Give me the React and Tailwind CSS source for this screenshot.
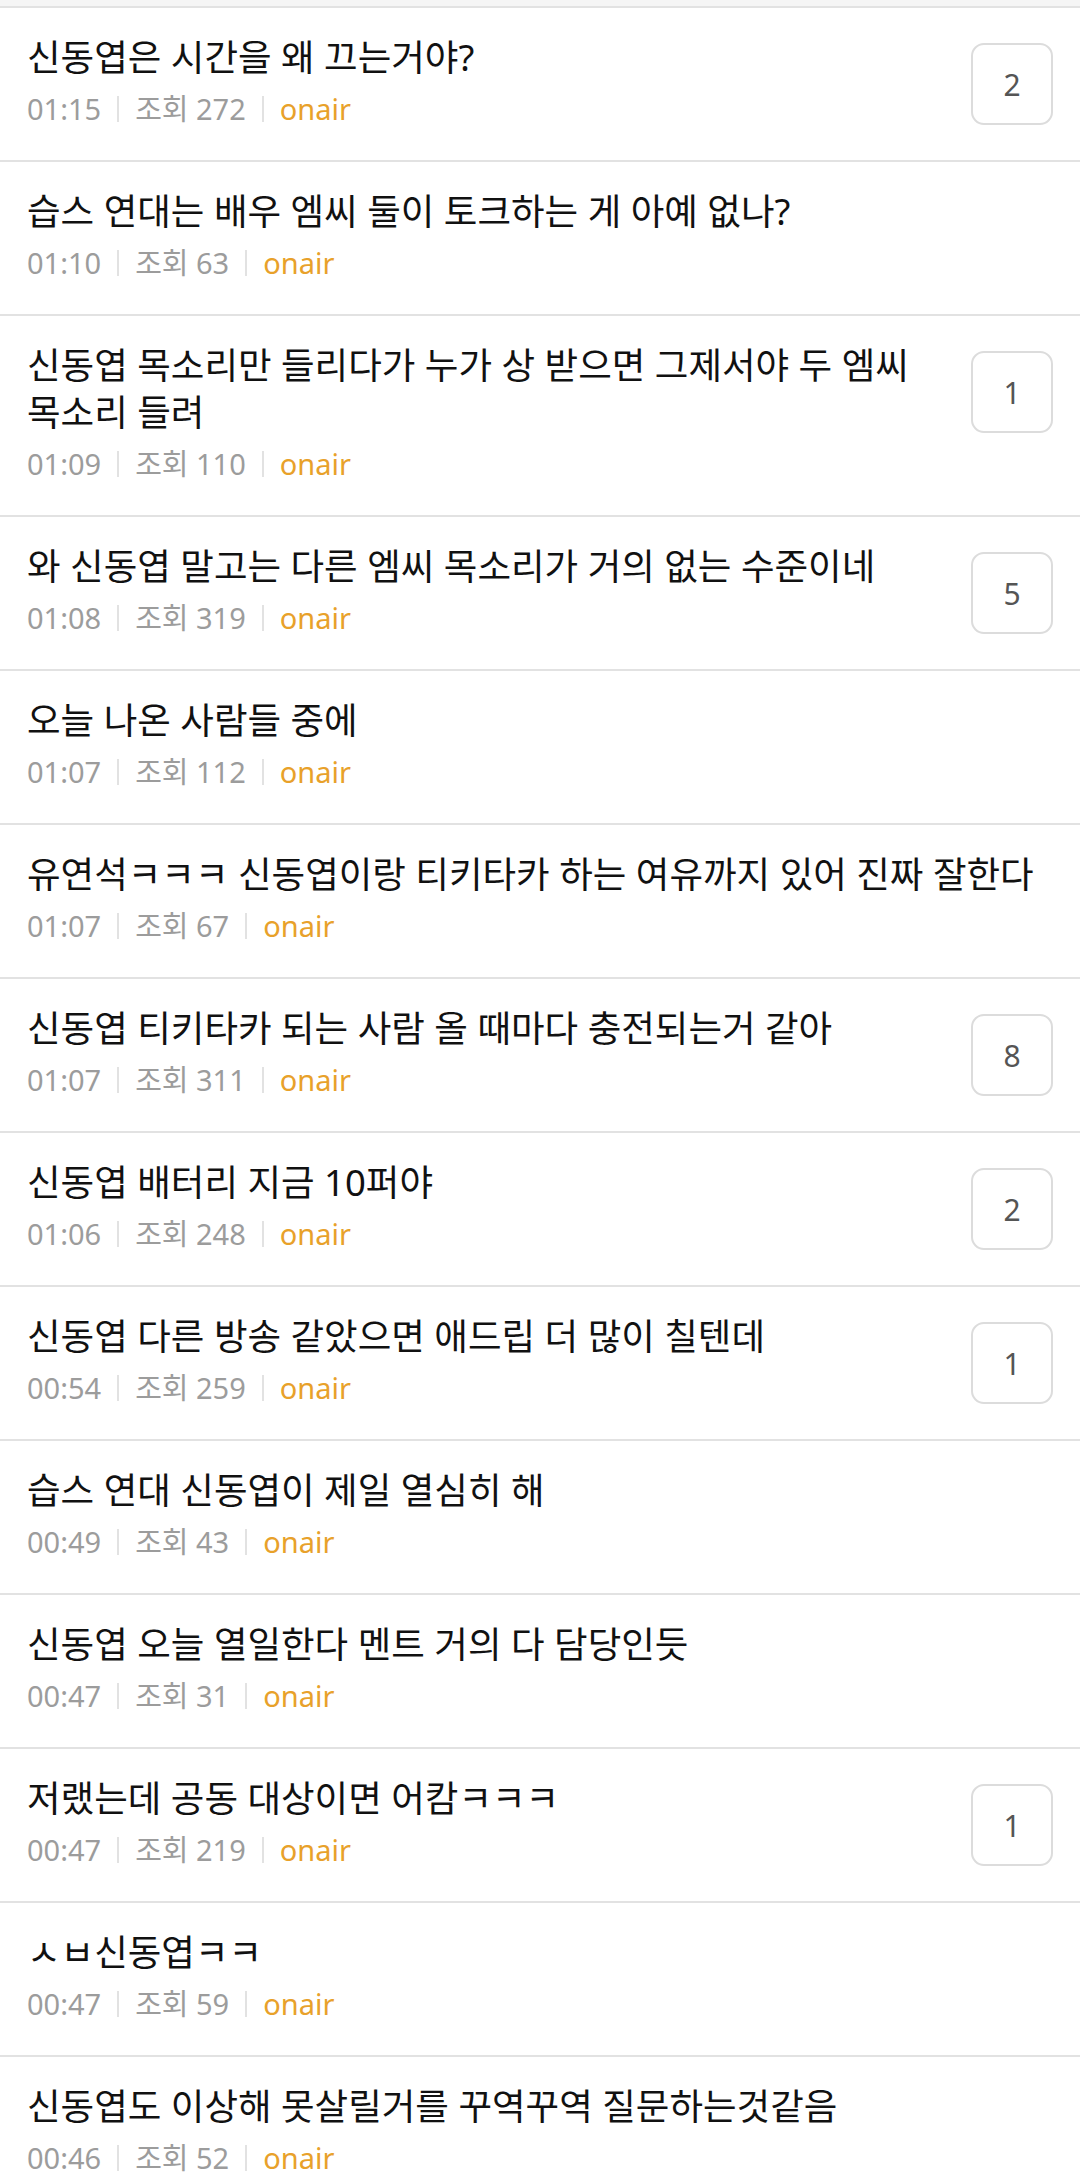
import React from 'react';

const posts = [
  { title: '신동엽은 시간을 왜 끄는거야?', time: '01:15', views: 272, comments: 2 },
  { title: '습스 연대는 배우 엠씨 둘이 토크하는 게 아예 없나?', time: '01:10', views: 63 },
  { title: '신동엽 목소리만 들리다가 누가 상 받으면 그제서야 두 엠씨 목소리 들려', time: '01:09', views: 110, comments: 1 },
  { title: '와 신동엽 말고는 다른 엠씨 목소리가 거의 없는 수준이네', time: '01:08', views: 319, comments: 5 },
  { title: '오늘 나온 사람들 중에', time: '01:07', views: 112 },
  { title: '유연석ㅋㅋㅋ 신동엽이랑 티키타카 하는 여유까지 있어 진짜 잘한다', time: '01:07', views: 67 },
  { title: '신동엽 티키타카 되는 사람 올 때마다 충전되는거 같아', time: '01:07', views: 311, comments: 8 },
  { title: '신동엽 배터리 지금 10퍼야', time: '01:06', views: 248, comments: 2 },
  { title: '신동엽 다른 방송 같았으면 애드립 더 많이 칠텐데', time: '00:54', views: 259, comments: 1 },
  { title: '습스 연대 신동엽이 제일 열심히 해', time: '00:49', views: 43 },
  { title: '신동엽 오늘 열일한다 멘트 거의 다 담당인듯', time: '00:47', views: 31 },
  { title: '저랬는데 공동 대상이면 어캄ㅋㅋㅋ', time: '00:47', views: 219, comments: 1 },
  { title: 'ㅅㅂ신동엽ㅋㅋ', time: '00:47', views: 59 },
  { title: '신동엽도 이상해 못살릴거를 꾸역꾸역 질문하는것같음', time: '00:46', views: 52 },
];

const Divider = () => <span className="mx-[16px] h-[26px] w-[2px] bg-[#e2e2e2]" />;

const PostRow = ({ title, time, views, comments }) => (
  <div className="flex border-t-2 border-[#e2e2e2] pl-[27px] pr-[27px] pt-[26px] pb-[31px]">
    <div className="min-w-0 flex-1">
      <p className={`break-keep text-[36.5px] leading-[47px] text-[#111] ${comments ? 'pr-[20px]' : ''}`}>{title}</p>
      <div className="mt-[8px] flex h-[40px] items-center text-[29px] text-[#9c9c9c]">
        <span>{time}</span>
        <Divider />
        <span>조회 {views}</span>
        <Divider />
        <span className="text-[#e8a12a]">onair</span>
      </div>
    </div>
    {comments && (
      <div className="mt-[9px] flex h-[82px] w-[82px] shrink-0 items-center justify-center self-start rounded-[13px] border-2 border-[#dcdcdc] text-[30px] text-[#555]">
        {comments}
      </div>
    )}
  </div>
);

export default function App() {
  return (
    <div
      className="min-h-screen bg-white"
      style={{ fontFamily: '"Noto Sans", "Noto Sans CJK KR", sans-serif' }}
    >
      <div className="h-[6px] bg-[#f5f5f5]" />
      {posts.map((post, i) => (
        <PostRow key={i} {...post} />
      ))}
    </div>
  );
}
